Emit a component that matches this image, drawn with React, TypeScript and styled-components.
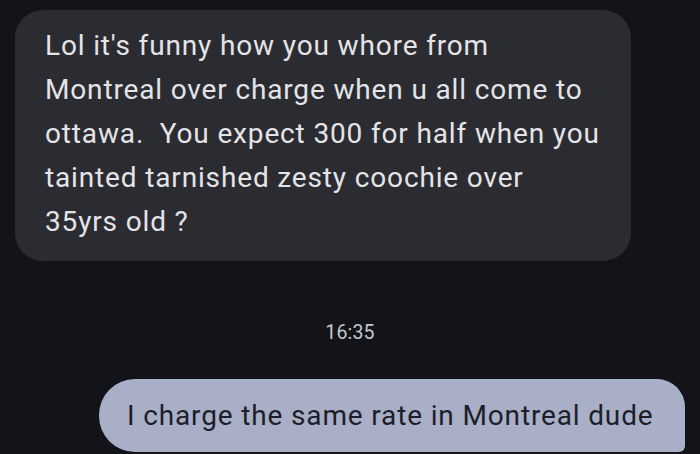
import React from "react";
import styled, { createGlobalStyle } from "styled-components";

const Global = createGlobalStyle`
  html, body { margin: 0; padding: 0; background: #131419; }
  body { width: 700px; height: 454px; overflow: hidden; font-family: Roboto, "Noto Sans", sans-serif; }
`;

const Screen = styled.div`
  width: 700px;
  height: 454px;
  background: #131419;
  display: flex;
  flex-direction: column;
  padding-top: 10px;
  box-sizing: border-box;
  overflow: hidden;
`;

const Row = styled.div<{ $out?: boolean }>`
  display: flex;
  justify-content: ${(p) => (p.$out ? "flex-end" : "flex-start")};
  padding: 0 15px;
`;

const InBubble = styled.div`
  width: 616px;
  box-sizing: border-box;
  background: #2b2c31;
  border-radius: 28px;
  padding: 14px 20px 17px 30px;
  color: #e4e4e8;
  font-size: 28px;
  letter-spacing: 0.85px;
  line-height: 44px;
`;

const Line = styled.span`
  display: block;
  white-space: pre;
`;

const Stamp = styled.div`
  margin-top: 57px;
  text-align: center;
  color: #c6c7cc;
  font-size: 19.5px;
  letter-spacing: 0.2px;
  line-height: 30px;
  height: 30px;
`;

const OutBubble = styled.div`
  margin-top: 31px;
  height: 73px;
  box-sizing: border-box;
  background: #a9afc6;
  border-radius: 36px 28px 6px 36px;
  padding: 0 28px 0 28px;
  display: flex;
  align-items: center;
  color: #1c1f2a;
  font-size: 28px;
  letter-spacing: 0.85px;
  width: 586px;
`;

const incoming = [
  "Lol it's funny how you whore from",
  "Montreal over charge when u all come to",
  "ottawa.  You expect 300 for half when you",
  "tainted tarnished zesty coochie over",
  "35yrs old ?",
];

export default function App() {
  return (
    <Screen>
      <Global />
      <Row>
        <InBubble>
          {incoming.map((l, i) => (
            <Line key={i}>{l}</Line>
          ))}
        </InBubble>
      </Row>
      <Stamp>16:35</Stamp>
      <Row $out>
        <OutBubble>I charge the same rate in Montreal dude</OutBubble>
      </Row>
    </Screen>
  );
}
